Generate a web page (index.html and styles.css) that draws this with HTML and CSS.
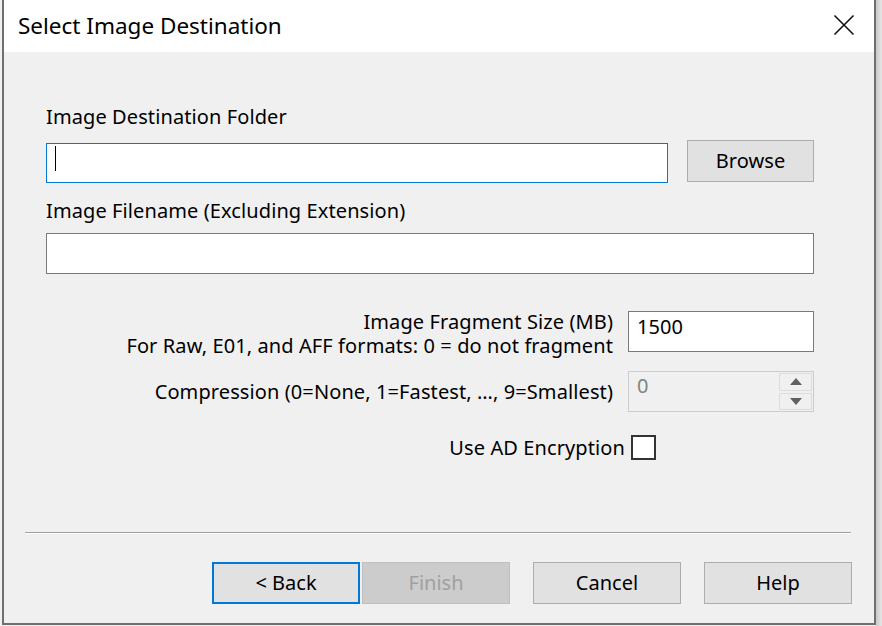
FILE: index.html
```html
<!DOCTYPE html>
<html>
<head>
<meta charset="utf-8">
<link rel="stylesheet" href="styles.css">
</head>
<body>
<div class="desk">
  <div class="dialog">
    <div class="titlebar">
      <span class="title">Select Image Destination</span>
      <span class="close">
        <svg width="22" height="22" viewBox="0 0 22 22"><path d="M1.5 1.5 L20.5 20.5 M20.5 1.5 L1.5 20.5" stroke="#111" stroke-width="1.6" fill="none"/></svg>
      </span>
    </div>
    <div class="content">
      <div class="label first">Image Destination Folder</div>
      <div class="row-folder">
        <div class="input focused"><span class="caret"></span></div>
        <div class="btn browse">Browse</div>
      </div>
      <div class="label second">Image Filename (Excluding Extension)</div>
      <div class="input wide"></div>
      <div class="grid">
        <div class="rlabel two">
          <div class="line">Image Fragment Size (MB)</div>
          <div class="line">For Raw, E01, and AFF formats: 0 = do not fragment</div>
        </div>
        <div class="input num">1500</div>
        <div class="rlabel one">Compression (0=None, 1=Fastest, …, 9=Smallest)</div>
        <div class="spin">
          <span class="spin-val">0</span>
          <span class="spin-btns">
            <span class="sb"><svg width="12" height="7" viewBox="0 0 12 7"><path d="M0 7 L6 0 L12 7 Z" fill="#606060"/></svg></span>
            <span class="sb"><svg width="12" height="7" viewBox="0 0 12 7"><path d="M0 0 L6 7 L12 0 Z" fill="#606060"/></svg></span>
          </span>
        </div>
      </div>
      <div class="check-row">
        <span>Use AD Encryption</span>
        <span class="checkbox"></span>
      </div>
    </div>
    <div class="sep"></div>
    <div class="buttons">
      <div class="btn default">&lt; Back</div>
      <div class="btn disabled">Finish</div>
      <div class="btn gap">Cancel</div>
      <div class="btn gap">Help</div>
    </div>
  </div>
  <div class="shadow"></div>
</div>
</body>
</html>
```
FILE: styles.css
```css
html, body {
  margin: 0;
  padding: 0;
  width: 882px;
  height: 626px;
  overflow: hidden;
  background: #f0f0f0;
  font-family: "Noto Sans", "Open Sans", sans-serif;
  color: #000;
}
.desk {
  display: flex;
  padding-left: 2px;
  height: 626px;
}
.dialog {
  width: 870px;
  height: 623px;
  border-left: 2px solid #6f6f6f;
  border-right: 2px solid #6f6f6f;
  border-bottom: 2px solid #6f6f6f;
  background: #f0f0f0;
  display: flex;
  flex-direction: column;
}
.shadow {
  flex: 1;
  background: linear-gradient(to right, #c8c8c8, #e6e6e6);
  height: 626px;
}
.titlebar {
  height: 52px;
  background: #fff;
  display: flex;
  align-items: center;
  justify-content: space-between;
  padding-left: 14px;
  padding-right: 19px;
  box-sizing: border-box;
}
.title {
  font-size: 22.5px;
  margin-top: -1px;
}
.close {
  display: flex;
  margin-top: -3px;
}
.content {
  padding: 0 60px 0 42px;
  font-size: 20px;
  letter-spacing: 0.1px;
}
.label {
  line-height: 24px;
}
.label.first { margin-top: 53px; }
.label.second { margin-top: 16px; }
.row-folder {
  display: flex;
  align-items: flex-start;
  margin-top: 11px;
}
.input {
  box-sizing: border-box;
  height: 40px;
  background: #fff;
  border: 1px solid #7a7a7a;
}
.input.focused {
  flex: 1;
  margin-top: 3px;
  border-color: #0078d7;
  position: relative;
}
.caret {
  position: absolute;
  left: 8px;
  top: 2px;
  width: 1px;
  height: 25px;
  background: #000;
}
.input.wide {
  margin-top: 10px;
  height: 41px;
}
.btn {
  box-sizing: border-box;
  height: 42px;
  width: 148px;
  background: #e1e1e1;
  border: 1px solid #adadad;
  display: flex;
  align-items: center;
  justify-content: center;
  font-size: 20px;
  padding-bottom: 1px;
}
.btn.browse {
  width: 127px;
  margin-left: 19px;
}
.grid {
  display: grid;
  grid-template-columns: 1fr 186px;
  grid-template-rows: 41px 41px;
  column-gap: 15px;
  row-gap: 19px;
  margin-top: 37px;
}
.rlabel {
  text-align: right;
  line-height: 24px;
  white-space: nowrap;
}
.rlabel .line {
  height: 24px;
  line-height: 24px;
}
.rlabel.two { margin-top: -1px; }
.rlabel.one { align-self: center; margin-top: 1px; }
.input.num {
  height: 41px;
  padding: 3px 0 0 8px;
  line-height: 24px;
}
.spin {
  box-sizing: border-box;
  height: 41px;
  border: 1px solid #cccccc;
  background: #f0f0f0;
  display: flex;
  justify-content: space-between;
}
.spin-val {
  color: #838383;
  padding: 2px 0 0 8px;
  line-height: 24px;
}
.spin-btns {
  display: flex;
  flex-direction: column;
  gap: 2px;
  padding: 1px 1px 1px 0;
  width: 33px;
}
.sb {
  flex: 1;
  box-sizing: border-box;
  border: 1px solid #dcdcdc;
  display: flex;
  align-items: center;
  justify-content: center;
}
.check-row {
  display: flex;
  align-items: center;
  justify-content: flex-end;
  margin-top: 23px;
  padding-right: 158px;
  gap: 6px;
  line-height: 24px;
}
.checkbox {
  width: 25px;
  height: 25px;
  box-sizing: border-box;
  border: 2px solid #333;
  background: #fff;
}
.sep {
  margin: 72px 23px 0 21px;
  height: 1px;
  background: #a0a0a0;
  border-bottom: 1px solid #fff;
}
.buttons {
  display: flex;
  margin-top: 28px;
  padding-left: 208px;
}
.btn.default {
  border: 2px solid #0078d7;
}
.btn.disabled {
  margin-left: 2px;
  background: #cccccc;
  border-color: #bfbfbf;
  color: #a0a0a0;
}
.btn.gap {
  margin-left: 23px;
}
```
